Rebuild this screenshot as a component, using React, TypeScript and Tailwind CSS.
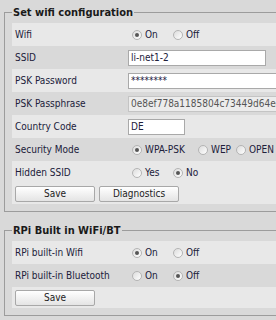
import React from "react";

function Radio({ checked }: { checked?: boolean }) {
  return (
    <span className="w-[10px] h-[10px] rounded-full border border-[#b4b4b4] bg-gradient-to-br from-[#dcdcdc] to-white flex items-center justify-center shrink-0">
      {checked && <span className="w-[4px] h-[4px] rounded-full bg-[#555]" />}
    </span>
  );
}

function Option({ label, checked, w }: { label: string; checked?: boolean; w: string }) {
  return (
    <span className={`flex items-center gap-[3px] ${w}`}>
      <Radio checked={checked} />
      <span>{label}</span>
    </span>
  );
}

function Row({ label, light, children }: { label: string; light?: boolean; children?: React.ReactNode }) {
  return (
    <div className={`flex items-center h-[23px] ${light ? "bg-[#e8e8e8]" : ""}`}>
      <div className="w-[116px] pl-[3px] shrink-0">{label}</div>
      <div className="flex items-center pl-[4px]">{children}</div>
    </div>
  );
}

function Btn({ children }: { children: React.ReactNode }) {
  return (
    <button className="w-[80px] h-[16px] border border-[#a8a8a8] rounded-[2px] bg-gradient-to-b from-white to-[#e4e4e4] text-[#222] leading-none">
      {children}
    </button>
  );
}

export default function App() {
  return (
    <div className="w-[276px] h-[320px] overflow-hidden bg-[#d9d9d9] pt-[6px] pl-[4px] text-[10px] text-[#20203a] font-['DejaVu_Sans_Condensed','DejaVu_Sans',sans-serif]">
      {/* ================= WIFI CONFIG ================= */}
      <fieldset className="w-[340px] border border-[#9c9c9c] px-[7px] pb-[7px]">
        <legend className="px-[1px] font-bold text-[11px] leading-[13px] text-[#1a1a1a]">Set wifi configuration</legend>
        <div className="mt-[4px]">
          <Row label="Wifi" light>
            <Option label="On" checked w="w-[41px]" />
            <Option label="Off" w="w-[40px]" />
          </Row>
          <Row label="SSID">
            <input
              readOnly
              defaultValue="li-net1-2"
              className="-ml-[4px] w-[138px] h-[16px] border border-[#a9a9a9] bg-white px-[2px] text-[10px] outline-none"
            />
          </Row>
          <Row label="PSK Password" light>
            <input
              readOnly
              defaultValue="********"
              className="-ml-[4px] w-[200px] h-[16px] border border-[#a9a9a9] bg-white px-[2px] text-[10px] outline-none"
            />
          </Row>
          <Row label="PSK Passphrase">
            <input
              readOnly
              defaultValue="0e8ef778a1185804c73449d64e4c2a"
              className="-ml-[4px] w-[200px] h-[16px] border border-[#c4c4c4] bg-[#ececec] px-[2px] text-[10px] text-[#555] outline-none"
            />
          </Row>
          <Row label="Country Code" light>
            <input
              readOnly
              defaultValue="DE"
              className="-ml-[4px] w-[57px] h-[16px] border border-[#a9a9a9] bg-white px-[2px] text-[10px] outline-none"
            />
          </Row>
          <Row label="Security Mode">
            <Option label="WPA-PSK" checked w="w-[66px]" />
            <Option label="WEP" w="w-[38px]" />
            <Option label="OPEN" w="w-[50px]" />
          </Row>
          <Row label="Hidden SSID" light>
            <Option label="Yes" w="w-[41px]" />
            <Option label="No" checked w="w-[40px]" />
          </Row>
          <div className="flex items-center gap-[4px] h-[20px] pl-[3px] bg-[#e8e8e8]">
            <Btn>Save</Btn>
            <Btn>Diagnostics</Btn>
          </div>
        </div>
      </fieldset>

      {/* ================= RPI BUILT IN ================= */}
      <fieldset className="mt-[12px] w-[340px] border border-[#9c9c9c] px-[7px] pb-[7px]">
        <legend className="px-[1px] font-bold text-[11px] leading-[13px] text-[#1a1a1a]">RPi Built in WiFi/BT</legend>
        <div className="mt-[4px]">
          <Row label="RPi built-in Wifi" light>
            <Option label="On" checked w="w-[41px]" />
            <Option label="Off" w="w-[40px]" />
          </Row>
          <Row label="RPi built-in Bluetooth">
            <Option label="On" w="w-[41px]" />
            <Option label="Off" checked w="w-[40px]" />
          </Row>
          <div className="flex items-center h-[21px] pl-[3px] bg-[#e8e8e8]">
            <Btn>Save</Btn>
          </div>
        </div>
      </fieldset>
    </div>
  );
}
